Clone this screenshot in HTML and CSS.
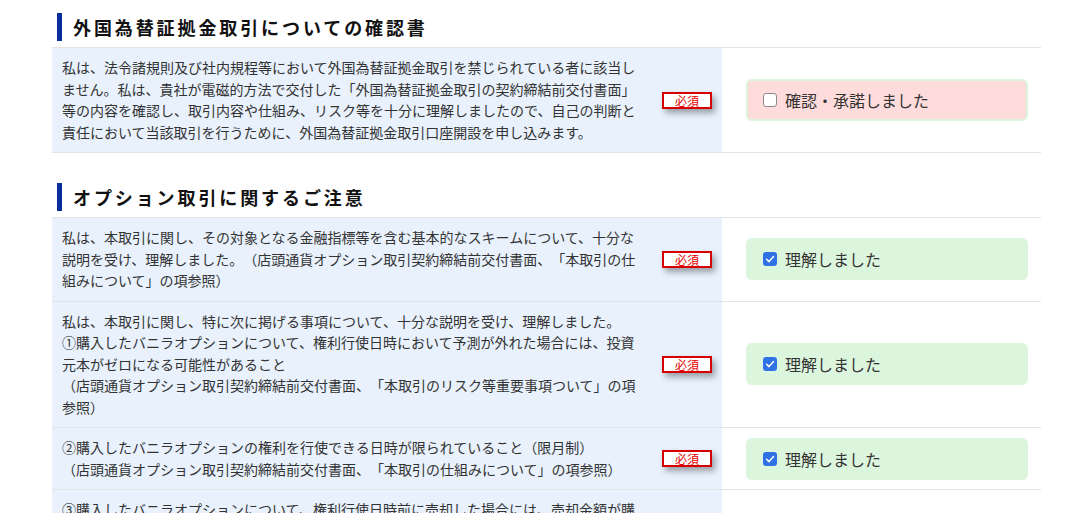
FILE: index.html
```html
<!DOCTYPE html>
<html lang="ja">
<head>
<meta charset="utf-8">
<title>確認書</title>
<link rel="stylesheet" href="styles.css">
</head>
<body>
<div class="page">
  <section class="section">
    <h2 class="heading">外国為替証拠金取引についての確認書</h2>
    <div class="table">
      <div class="row">
        <div class="cell-left">
          <p class="text">私は、法令諸規則及び社内規程等において外国為替証拠金取引を禁じられている者に該当しません。私は、貴社が電磁的方法で交付した「外国為替証拠金取引の契約締結前交付書面」等の内容を確認し、取引内容や仕組み、リスク等を十分に理解しましたので、自己の判断と責任において当該取引を行うために、外国為替証拠金取引口座開設を申し込みます。</p>
          <span class="badge">必須</span>
        </div>
        <div class="cell-right">
          <label class="agree agree-invalid">
            <span class="cb"></span>
            <span class="agree-label">確認・承諾しました</span>
          </label>
        </div>
      </div>
    </div>
  </section>

  <section class="section">
    <h2 class="heading">オプション取引に関するご注意</h2>
    <div class="table">
      <div class="row">
        <div class="cell-left">
          <p class="text">私は、本取引に関し、その対象となる金融指標等を含む基本的なスキームについて、十分な説明を受け、理解しました。（店頭通貨オプション取引契約締結前交付書面、「本取引の仕組みについて」の項参照）</p>
          <span class="badge">必須</span>
        </div>
        <div class="cell-right">
          <label class="agree">
            <span class="cb cb-on"><svg viewBox="0 0 14 14" width="14" height="14"><path d="M3.6 7.3 L6 9.6 L10.5 4.5" fill="none" stroke="#fff" stroke-width="1.5" stroke-linecap="round" stroke-linejoin="round"/></svg></span>
            <span class="agree-label">理解しました</span>
          </label>
        </div>
      </div>
      <div class="row">
        <div class="cell-left">
          <p class="text">私は、本取引に関し、特に次に掲げる事項について、十分な説明を受け、理解しました。<br>①購入したバニラオプションについて、権利行使日時において予測が外れた場合には、投資元本がゼロになる可能性があること<br>（店頭通貨オプション取引契約締結前交付書面、「本取引のリスク等重要事項ついて」の項参照）</p>
          <span class="badge">必須</span>
        </div>
        <div class="cell-right">
          <label class="agree">
            <span class="cb cb-on"><svg viewBox="0 0 14 14" width="14" height="14"><path d="M3.6 7.3 L6 9.6 L10.5 4.5" fill="none" stroke="#fff" stroke-width="1.5" stroke-linecap="round" stroke-linejoin="round"/></svg></span>
            <span class="agree-label">理解しました</span>
          </label>
        </div>
      </div>
      <div class="row">
        <div class="cell-left">
          <p class="text">②購入したバニラオプションの権利を行使できる日時が限られていること（限月制）<br>（店頭通貨オプション取引契約締結前交付書面、「本取引の仕組みについて」の項参照）</p>
          <span class="badge">必須</span>
        </div>
        <div class="cell-right">
          <label class="agree">
            <span class="cb cb-on"><svg viewBox="0 0 14 14" width="14" height="14"><path d="M3.6 7.3 L6 9.6 L10.5 4.5" fill="none" stroke="#fff" stroke-width="1.5" stroke-linecap="round" stroke-linejoin="round"/></svg></span>
            <span class="agree-label">理解しました</span>
          </label>
        </div>
      </div>
      <div class="row">
        <div class="cell-left">
          <p class="text">③購入したバニラオプションについて、権利行使日時前に売却した場合には、売却金額が購入金額を下回る可能性があること<br>（店頭通貨オプション取引契約締結前交付書面、「本取引のリスク等重要事項ついて」の項参照）</p>
          <span class="badge">必須</span>
        </div>
        <div class="cell-right">
          <label class="agree">
            <span class="cb cb-on"><svg viewBox="0 0 14 14" width="14" height="14"><path d="M3.6 7.3 L6 9.6 L10.5 4.5" fill="none" stroke="#fff" stroke-width="1.5" stroke-linecap="round" stroke-linejoin="round"/></svg></span>
            <span class="agree-label">理解しました</span>
          </label>
        </div>
      </div>
    </div>
  </section>
</div>
</body>
</html>
```

FILE: styles.css
```css
* {
  box-sizing: border-box;
}

html, body {
  margin: 0;
  padding: 0;
  background: #ffffff;
}

body {
  font-family: "Noto Sans CJK JP", "Noto Sans", sans-serif;
  color: #333333;
  text-spacing-trim: space-all;
}

.page {
  width: 989px;
  margin-left: 52px;
  padding-top: 13px;
}

.section {
  margin-bottom: 30px;
}

.heading {
  margin: 0 0 6px 5px;
  padding-left: 11px;
  border-left: 5px solid #0a2d9c;
  font-size: 18px;
  font-weight: 700;
  line-height: 28px;
  letter-spacing: 2.9px;
  color: #111111;
}

.table {
  border-top: 1px solid #e4e4e4;
}

.row {
  display: flex;
  border-bottom: 1px solid #e4e4e4;
}

.cell-left {
  width: 670px;
  flex: none;
  display: flex;
  align-items: center;
  padding: 9px 10px;
  background: #e8f1fc;
}

.text {
  width: 578px;
  flex: none;
  margin: 0;
  font-size: 14px;
  line-height: 21.5px;
  color: #333333;
  text-spacing-trim: space-all;
}

.badge {
  margin-left: 22px;
  width: 50px;
  height: 17px;
  flex: none;
  border: 2px solid #d60000;
  background: #ffffff;
  color: #e50000;
  font-size: 12px;
  line-height: 13px;
  text-align: center;
  box-shadow: 3px 4px 6px rgba(0, 0, 0, 0.35);
}

.cell-right {
  flex: 1;
  display: flex;
  align-items: center;
  padding: 0 13px 0 24px;
  background: #ffffff;
}

.agree {
  width: 282px;
  height: 42px;
  display: flex;
  align-items: center;
  gap: 8px;
  padding-left: 17px;
  border-radius: 6px;
  background: #dcf5dd;
}

.agree-invalid {
  border: 2px solid #ddf3dd;
  background: #ffdcdc;
  padding-left: 15px;
}

.cb {
  width: 14px;
  height: 14px;
  flex: none;
  border: 1px solid #8a8a8a;
  border-radius: 3px;
  background: #ffffff;
  display: flex;
}

.cb-on {
  border: none;
  background: #2f72e6;
}

.agree-label {
  font-size: 16px;
  line-height: 22px;
  color: #333333;
}
```
